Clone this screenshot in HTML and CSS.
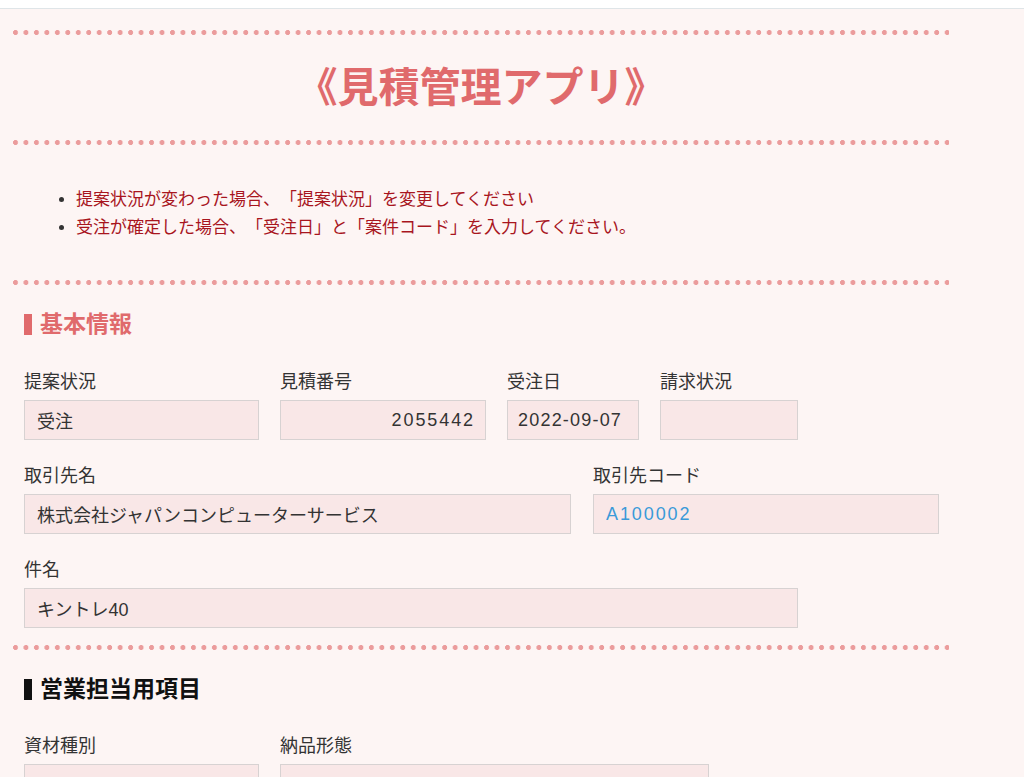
FILE: index.html
```html
<!DOCTYPE html>
<html lang="ja">
<head>
<meta charset="UTF-8">
<meta name="viewport" content="width=device-width, initial-scale=1.0">
<title>見積管理アプリ</title>
<link rel="stylesheet" href="styles.css">
</head>
<body>
    <div class="topbar"></div>

    <div class="wrap">
        <div class="dots first"></div>
        <h1 class="app-title">《見積管理アプリ》</h1>
        <div class="dots"></div>

        <ul class="notes">
            <li>提案状況が変わった場合、「提案状況」を変更してください</li>
            <li>受注が確定した場合、「受注日」と「案件コード」を入力してください。</li>
        </ul>

        <div class="dots notes-end"></div>

        <!-- 基本情報 -->
        <section class="block">
            <h2 class="sec-title red">基本情報</h2>

            <div class="row">
                <div class="field w-status">
                    <label>提案状況</label>
                    <input type="text" value="受注" readonly>
                </div>
                <div class="field w-no">
                    <label>見積番号</label>
                    <input type="text" class="num right" value="2055442" readonly>
                </div>
                <div class="field w-date">
                    <label>受注日</label>
                    <input type="text" class="num date" value="2022-09-07" readonly>
                </div>
                <div class="field w-bill">
                    <label>請求状況</label>
                    <input type="text" value="" readonly>
                </div>
            </div>

            <div class="row">
                <div class="field w-client">
                    <label>取引先名</label>
                    <input type="text" value="株式会社ジャパンコンピューターサービス" readonly>
                </div>
                <div class="field w-code">
                    <label>取引先コード</label>
                    <input type="text" class="num link" value="A100002" readonly>
                </div>
            </div>

            <div class="row">
                <div class="field w-subject">
                    <label>件名</label>
                    <input type="text" value="キントレ40" readonly>
                </div>
            </div>
        </section>

        <div class="dots after-block"></div>

        <!-- 営業担当用項目 -->
        <section class="block sales">
            <h2 class="sec-title">営業担当用項目</h2>

            <div class="row">
                <div class="field w-status">
                    <label>資材種別</label>
                    <input type="text" value="" readonly>
                </div>
                <div class="field w-deliv">
                    <label>納品形態</label>
                    <input type="text" value="" readonly>
                </div>
            </div>
        </section>
    </div>
</body>
</html>
```

FILE: styles.css
```css
body {
    font-family: "Liberation Sans", "Noto Sans CJK JP", sans-serif;
    background-color: #fdf5f4;
    color: #333;
    margin: 0;
    padding: 0;
    text-spacing-trim: space-all;
}

.topbar {
    height: 8px;
    background-color: #fff;
    border-bottom: 1px solid #dfe5e8;
}

.wrap {
    width: 936px;
    margin-left: 13px;
}

/* dotted separators */
.dots {
    height: 5px;
    margin-top: 29px;
    background-image: radial-gradient(circle at 2.5px 2.5px, #eb9c9c 2.2px, transparent 2.8px);
    background-size: 10.47px 5px;
    background-repeat: repeat-x;
}

.dots.first {
    margin-top: 21px;
}

.dots.notes-end {
    margin-top: 38px;
}

.dots.after-block {
    margin-top: 17px;
}

.app-title {
    margin: 24px 0 0;
    font-family: "Noto Sans CJK JP", sans-serif;
    font-size: 41px;
    line-height: 50px;
    font-weight: bold;
    text-align: center;
    color: #e06a6c;
}

.app-title + .dots {
    margin-top: 31px;
}

.notes {
    margin: 41px 0 0;
    padding-left: 63px;
    font-size: 17px;
    line-height: 28px;
    color: #a8151e;
}

.notes li::marker {
    color: #333;
}

.block {
    padding-left: 11px;
}

.sec-title {
    margin: 23px 0 0;
    font-size: 23px;
    line-height: 32px;
    font-weight: bold;
    color: #111;
    display: flex;
    align-items: center;
}

.sec-title::before {
    content: "";
    display: inline-block;
    width: 8px;
    height: 21px;
    margin-right: 8px;
    background-color: #111;
}

.sec-title.red {
    color: #e06a6c;
}

.sec-title.red::before {
    background-color: #e06a6c;
}

.row {
    display: flex;
    gap: 21px;
    margin-top: 24px;
}

.sec-title + .row {
    margin-top: 30px;
}

.sales .sec-title + .row {
    margin-top: 29px;
}

.field label {
    display: block;
    font-size: 18px;
    line-height: 24px;
    margin-bottom: 6px;
}

.field input {
    display: block;
    width: 100%;
    height: 40px;
    box-sizing: border-box;
    padding: 0 12px;
    font-family: inherit;
    font-size: 18px;
    color: #333;
    background-color: #f9e7e7;
    border: 1px solid #d7d2d2;
    border-radius: 0;
    outline: none;
    text-spacing-trim: space-all;
}

.field input.num {
    letter-spacing: 1.9px;
}

.field input.date {
    padding-left: 10px;
    letter-spacing: 1.2px;
}

.field input.right {
    text-align: right;
    padding-right: 10px;
}

.field input.link {
    color: #3a9ad9;
}

.w-status  { width: 235px; }
.w-no      { width: 206px; }
.w-date    { width: 132px; }
.w-bill    { width: 138px; }
.w-client  { width: 547px; }
.w-code    { width: 346px; margin-left: 1px; }
.w-subject { width: 774px; }
.w-deliv   { width: 429px; }
```
